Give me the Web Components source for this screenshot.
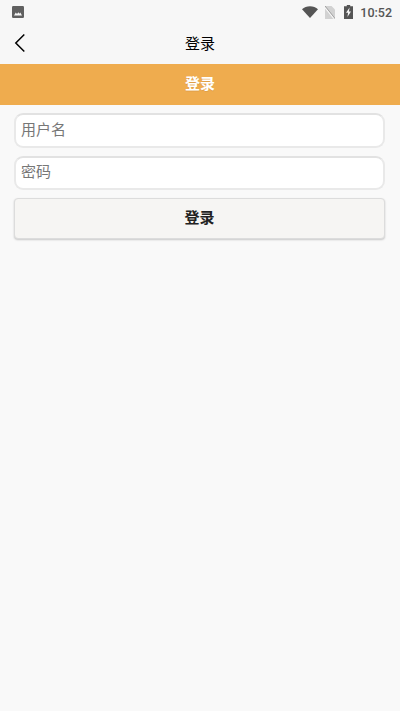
<!DOCTYPE html>
<html lang="zh"><head><meta charset="utf-8"><title>登录</title>
<style>
html,body{margin:0;padding:0;height:100%;background:#f9f9f9;font-family:Roboto,"Noto Sans CJK SC",sans-serif}
body{display:flex;flex-direction:column;height:711px;overflow:hidden}
</style></head><body>
<status-bar time="10:52"></status-bar>
<nav-bar>登录</nav-bar>
<page-header>登录</page-header>
<login-form>
  <text-field style="height:35px">用户名</text-field>
  <text-field style="height:34px;padding-bottom:5px">密码</text-field>
  <action-button>登录</action-button>
</login-form>
<script>
function def(name, html, setup){
  customElements.define(name, class extends HTMLElement{
    constructor(){super();this.attachShadow({mode:'open'}).innerHTML=html;}
    connectedCallback(){if(setup)setup(this);}
  });
}
def('status-bar',`<style>
:host{display:flex;align-items:center;height:24px;padding:0 8px 0 12px;box-sizing:border-box;background:#f7f7f7;color:#555;font:500 12.5px Roboto,sans-serif}
.sp{flex:1}
svg{display:block}
.w{margin-right:7px}.s{margin-right:9px}.b{margin-right:7px}
</style>
<svg width="12" height="12" viewBox="0 0 12 12"><rect width="12" height="12" rx="1.2" fill="#606060"/><path d="M2 9.500 3.800 6.600 5 8 6.400 6.200 7.400 7.700 8.300 6.600 10 9.500Z" fill="#f7f7f7"/></svg>
<span class="sp"></span>
<svg class="w" width="16" height="12" viewBox="0 0 16 12"><path d="M0 3.200C2.100 1.300 4.900.2 8 .2S13.900 1.300 16 3.200L8 12Z" fill="#555"/></svg>
<svg class="s" width="10" height="13" viewBox="0 0 10 13"><path d="M0 0H6.500L10 3.500V13H0Z" fill="#d2d2d2"/><path d="M0 1.400 9 12.600" stroke="#f7f7f7" stroke-width="1.400"/><path d="M0 0 10 12.500" stroke="#888" stroke-width=".7"/></svg>
<svg class="b" width="9" height="14" viewBox="0 0 9 14"><path d="M2.800 0H6.200V1.300H9V14H0V1.300H2.800Z" fill="#555"/><path d="M5.600 2.600 2 7.800H4.100L3.400 12 7 6.400H4.900Z" fill="#f7f7f7"/></svg>
<span id="t"></span>`,el=>{el.shadowRoot.getElementById('t').textContent=el.getAttribute('time');});
def('nav-bar',`<style>
:host{display:flex;align-items:center;justify-content:center;position:relative;box-sizing:border-box;height:40px;padding-bottom:4px;background:#f7f7f7;color:#000;font:15px "Noto Sans CJK SC",sans-serif}
svg{position:absolute;left:13.500px;top:9px}
</style>
<svg width="12" height="20" viewBox="0 0 12 20"><path d="M10.300 1.500 1.800 10 10.300 18.500" fill="none" stroke="#000" stroke-width="1.500"/></svg>
<slot></slot>`);
def('page-header',`<style>
:host{display:flex;align-items:center;justify-content:center;box-sizing:border-box;height:41px;padding-bottom:4px;background:#efac4e;color:#fff;font:700 15px "Noto Sans CJK SC",sans-serif;text-shadow:0 1px 0 #e0a048}
</style><slot></slot>`);
def('login-form',`<style>
:host{display:flex;flex-direction:column;gap:8px;padding:8px 15px 0 14px}
</style><slot></slot>`);
def('text-field',`<style>
:host{display:flex;align-items:center;box-sizing:border-box;padding:0 0 4px 5px;background:#fff;border:2px solid #e9e9e9;border-top-color:#e2e2e2;border-radius:9px;color:#777;font:15px "Noto Sans CJK SC",sans-serif}
</style><slot></slot>`);
def('action-button',`<style>
:host{display:flex;align-items:center;justify-content:center;box-sizing:border-box;height:41px;padding-bottom:4px;background:#f6f5f3;border:1px solid #dcdcdc;border-radius:4px;box-shadow:0 1px 2px rgba(0,0,0,.2);color:#222;font:700 15px "Noto Sans CJK SC",sans-serif}
</style><slot></slot>`);
</script>
</body></html>
